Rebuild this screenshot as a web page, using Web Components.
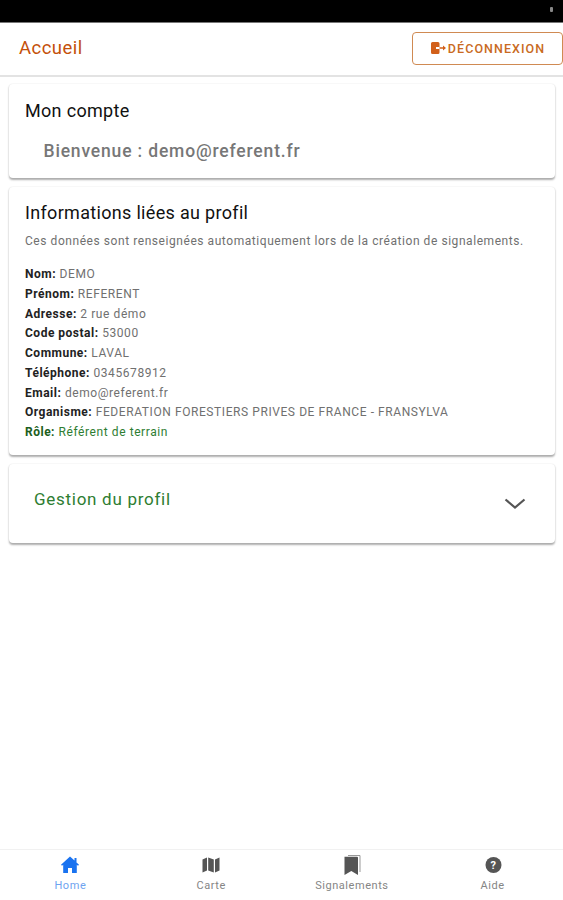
<!DOCTYPE html>
<html lang="fr"><head><meta charset="utf-8"><title>Accueil</title>
<style>
html,body{margin:0;height:100%}
body{font-family:Roboto,"Liberation Sans",sans-serif;background:#fff;color:#000}
app-shell{height:900px}
</style></head><body>
<app-shell>
  <app-toolbar slot="top"></app-toolbar>
  <info-card title-text="Mon compte" style="padding-top:16px;padding-bottom:16px"><div style="font-size:17.5px;font-weight:500;color:#777;letter-spacing:.83px;padding:0 0 0 18.5px;margin-top:18px;line-height:22px">Bienvenue : demo@referent.fr</div></info-card>
  <info-card title-text="Informations liées au profil" style="margin-top:9px;padding-top:15px">
    <div style="font-size:12px;color:#707070;letter-spacing:.56px;line-height:14px;margin-top:10px">Ces données sont renseignées automatiquement lors de la création de signalements.</div>
    <div style="margin-top:17px">
      <info-line label="Nom:">DEMO</info-line>
      <info-line label="Prénom:">REFERENT</info-line>
      <info-line label="Adresse:">2 rue démo</info-line>
      <info-line label="Code postal:">53000</info-line>
      <info-line label="Commune:">LAVAL</info-line>
      <info-line label="Téléphone:">0345678912</info-line>
      <info-line label="Email:">demo@referent.fr</info-line>
      <info-line label="Organisme:">FEDERATION FORESTIERS PRIVES DE FRANCE - FRANSYLVA</info-line>
      <info-line label="Rôle:" tone="green">Référent de terrain</info-line>
    </div>
  </info-card>
  <profile-accordion style="margin-top:9px">Gestion du profil</profile-accordion>
  <bottom-tabs slot="bottom"></bottom-tabs>
</app-shell>
<script>
function def(name,html,init){customElements.define(name,class extends HTMLElement{constructor(){super();this.attachShadow({mode:'open'}).innerHTML=html}connectedCallback(){init&&init(this)}})}
def('app-shell',`<style>:host{display:flex;flex-direction:column;height:900px;overflow:hidden}
.status{height:23px;background:#000;border-bottom:1px solid #777;flex:none;display:flex;justify-content:flex-end;align-items:center;padding-right:10px;box-sizing:border-box}
.status i{width:3px;height:5px;background:#888;border-radius:1px;display:block;margin-top:-3px}
main{flex:1;padding:7px 8px 0 9px;min-height:0;display:flex;flex-direction:column}
</style><div class="status"><i></i></div><slot name="top"></slot><main><slot></slot></main><slot name="bottom"></slot>`);
def('app-toolbar',`<style>:host{display:flex;flex:none;height:54px;align-items:center;justify-content:space-between;border-bottom:2px solid #e3e3e3;box-sizing:border-box;padding:0 0 2px 19px;background:#fff}
h1{margin:0;font-size:18.5px;font-weight:450;color:#c4500a;letter-spacing:.45px}
button{font:500 12.5px Roboto,"Liberation Sans",sans-serif;letter-spacing:1.05px;color:#c96a22;background:#fff;border:1.5px solid #d08a52;border-radius:4px;height:33px;width:151px;display:flex;align-items:center;justify-content:center;padding:0;box-sizing:border-box}
svg{width:18px;height:14px;flex:none}
</style><h1>Accueil</h1><button><svg viewBox="0 0 18 14"><path fill="#d2601a" d="M1 2.500A1.500 1.500 0 0 1 2.500 1H8a1.500 1.500 0 0 1 1.500 1.500V6H6v2h3.500v3.500A1.500 1.500 0 0 1 8 13H2.500A1.500 1.500 0 0 1 1 11.500z"/><path fill="#d2601a" d="M9.500 6.300h3.500V4.500L16 7l-3 2.500V7.700H9.500z"/></svg>DÉCONNEXION</button>`);
def('info-card',`<style>:host{display:block;flex:none;background:#fff;border-radius:4px;box-shadow:0 1.5px 2px rgba(0,0,0,.32),0 0 2px rgba(0,0,0,.06);padding:15px 16px 12px}
h2{margin:0;font-weight:450;font-size:18px;line-height:22px;letter-spacing:.32px;color:#111}
</style><h2></h2><slot></slot>`,el=>{el.shadowRoot.querySelector('h2').textContent=el.getAttribute('title-text')});
def('info-line',`<style>:host{display:block;font-size:12px;line-height:19.75px;color:#707070;letter-spacing:.58px;white-space:nowrap}
b{font-weight:700;color:#222;letter-spacing:.5px}:host([tone=green]){color:#2e7d32}:host([tone=green]) b{color:#1b5e20}
</style><b></b> <slot></slot>`,el=>{el.shadowRoot.querySelector('b').textContent=el.getAttribute('label')});
def('profile-accordion',`<style>:host{display:flex;flex:none;justify-content:space-between;height:79px;box-sizing:border-box;background:#fff;border-radius:4px;box-shadow:0 1.5px 2px rgba(0,0,0,.32),0 0 2px rgba(0,0,0,.06);padding:24px 28px 0 25px;color:#2e7d32;font-size:17px;font-weight:450;letter-spacing:.72px;line-height:22px}
svg{width:24px;height:24px;margin-top:3px}
</style><span><slot></slot></span><svg viewBox="0 0 24 24"><path d="M2.500 8.500 12 16.500l9.500-8" fill="none" stroke="#555" stroke-width="2.200"/></svg>`);
const tab=(cls,svg,t)=>`<div class="t ${cls}">${svg}<span>${t}</span></div>`;
def('bottom-tabs',`<style>:host{display:grid;flex:none;grid-template-columns:repeat(4,1fr);height:51px;border-top:1px solid #f1f1f1;background:#fff;box-sizing:border-box}
.t{display:flex;flex-direction:column;align-items:center;color:#858585;font-size:11px;letter-spacing:.55px;padding-top:5px}
.on{color:#6ea3f0}svg{width:20px;height:20px;display:block;overflow:visible}span{line-height:14px;margin-top:4px}
</style>`+
tab('on','<svg viewBox="0 0 20 20"><path fill="#1a73f0" d="M10 1.500 1 9.700l1 1.100 1.200-1V18H8v-5h4v5h4.800V9.800l1.200 1 1-1.100L16.500 7.500V3h-2v2.600z"/></svg>','Home')+
tab('','<svg viewBox="0 0 20 20"><path fill="#555" d="M1.500 4.500 6 2.500v13l-4.500 2zM7.200 2.500l5.600 2v13l-5.600-2zM14 4.500l4.500-2v13l-4.500 2z"/></svg>','Carte')+
tab('','<svg viewBox="0 0 20 20"><path fill="none" stroke="#999" d="M6 .5h12V17"/><path fill="#555" d="M2.500 1.800H15a1 1 0 0 1 1 1V20l-6.700-4L2.500 20z"/></svg>','Signalements')+
tab('','<svg viewBox="0 0 20 20"><circle cx="10.500" cy="10" r="8" fill="#555"/><text x="10.500" y="14" text-anchor="middle" font-family="Roboto" font-weight="700" font-size="11" fill="#fff">?</text></svg>','Aide'));
</script>
</body></html>
